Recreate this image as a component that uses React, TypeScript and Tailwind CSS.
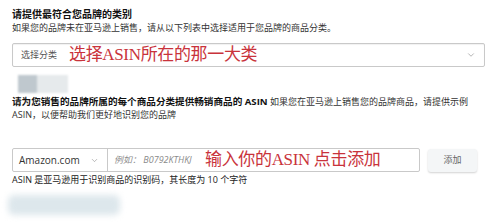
import { ChevronDown } from "lucide-react";

const SANS = "font-['Open_Sans','Noto_Sans_CJK_SC',sans-serif]";
const RED = "font-['Liberation_Serif','Noto_Sans_CJK_SC',serif] text-[#c9333b] text-[17px] leading-[20px] tracking-[-0.02em]";

export default function App() {
  return (
    <div className={`w-[499px] h-[222px] overflow-hidden bg-white pl-3 pr-[14px] pt-[7px] ${SANS}`}>
      {/* category section */}
      <p className="text-[10px] leading-[14px] font-bold text-[#111]">请提供最符合您品牌的类别</p>
      <p className="text-[9px] leading-[14px] text-[#333]">
        如果您的品牌未在亚马逊上销售，请从以下列表中选择适用于您品牌的商品分类。
      </p>

      <div className="mt-2 h-6 w-[473px] flex items-center border border-[#c9c9c9] rounded-[2px] pl-2 pr-[8px] shadow-[inset_0_1px_1px_rgba(0,0,0,0.06)]">
        <span className="text-[9px] text-[#555] w-[48px] shrink-0">选择分类</span>
        <span className={RED}>选择ASIN所在的那一大类</span>
        <ChevronDown className="ml-auto w-[10px] h-[10px] text-[#888]" strokeWidth={1.5} />
      </div>

      {/* blurred bits */}
      <div className="mt-2 ml-[6px] flex h-[18px] blur-[1px]">
        <div className="w-[19px] bg-[#bfc8ce]" />
        <div className="w-[31px] bg-[#e6eaec]" />
      </div>

      {/* ASIN section */}
      <p className="mt-[2px] text-[9px] leading-[13px] text-[#333]">
        <span className="text-[9.6px] font-bold text-[#111]">请为您销售的品牌所属的每个商品分类提供畅销商品的 ASIN</span>{" "}
        如果您在亚马逊上销售您的品牌商品，请提供示例
        <br />
        ASIN，以便帮助我们更好地识别您的品牌
      </p>

      <div className="mt-[27px] flex items-center gap-2">
        <div className="h-6 w-[408px] flex border border-[#c9c9c9] rounded-[2px]">
          <div className="w-[95px] shrink-0 flex items-center pl-[6px] pr-[8px] border-r border-[#c9c9c9]">
            <span className="text-[10px] text-[#333]">Amazon.com</span>
            <ChevronDown className="ml-auto w-[9px] h-[9px] text-[#888]" strokeWidth={1.5} />
          </div>
          <div className="flex-1 flex items-center pl-[6px]">
            <span className="text-[9px] italic text-[#8a8a8a] w-[91px] shrink-0">例如： B0792KTHKJ</span>
            <span className={RED}>输入你的ASIN 点击添加</span>
          </div>
        </div>
        <button className="h-[23px] w-[49px] rounded-[3px] bg-[#f4f6f7] text-[9px] text-[#666] shadow-[0_1px_2px_rgba(0,0,0,0.18)]">
          添加
        </button>
      </div>

      <p className="mt-[2px] text-[9px] leading-[12px] text-[#222]">
        ASIN 是亚马逊用于识别商品的识别码，其长度为 10 个字符
      </p>

      <div className="mt-[9px] -ml-[4px] h-[20px] w-[112px] rounded-[6px] bg-[#dde7ec] blur-[3px]" />
    </div>
  );
}
